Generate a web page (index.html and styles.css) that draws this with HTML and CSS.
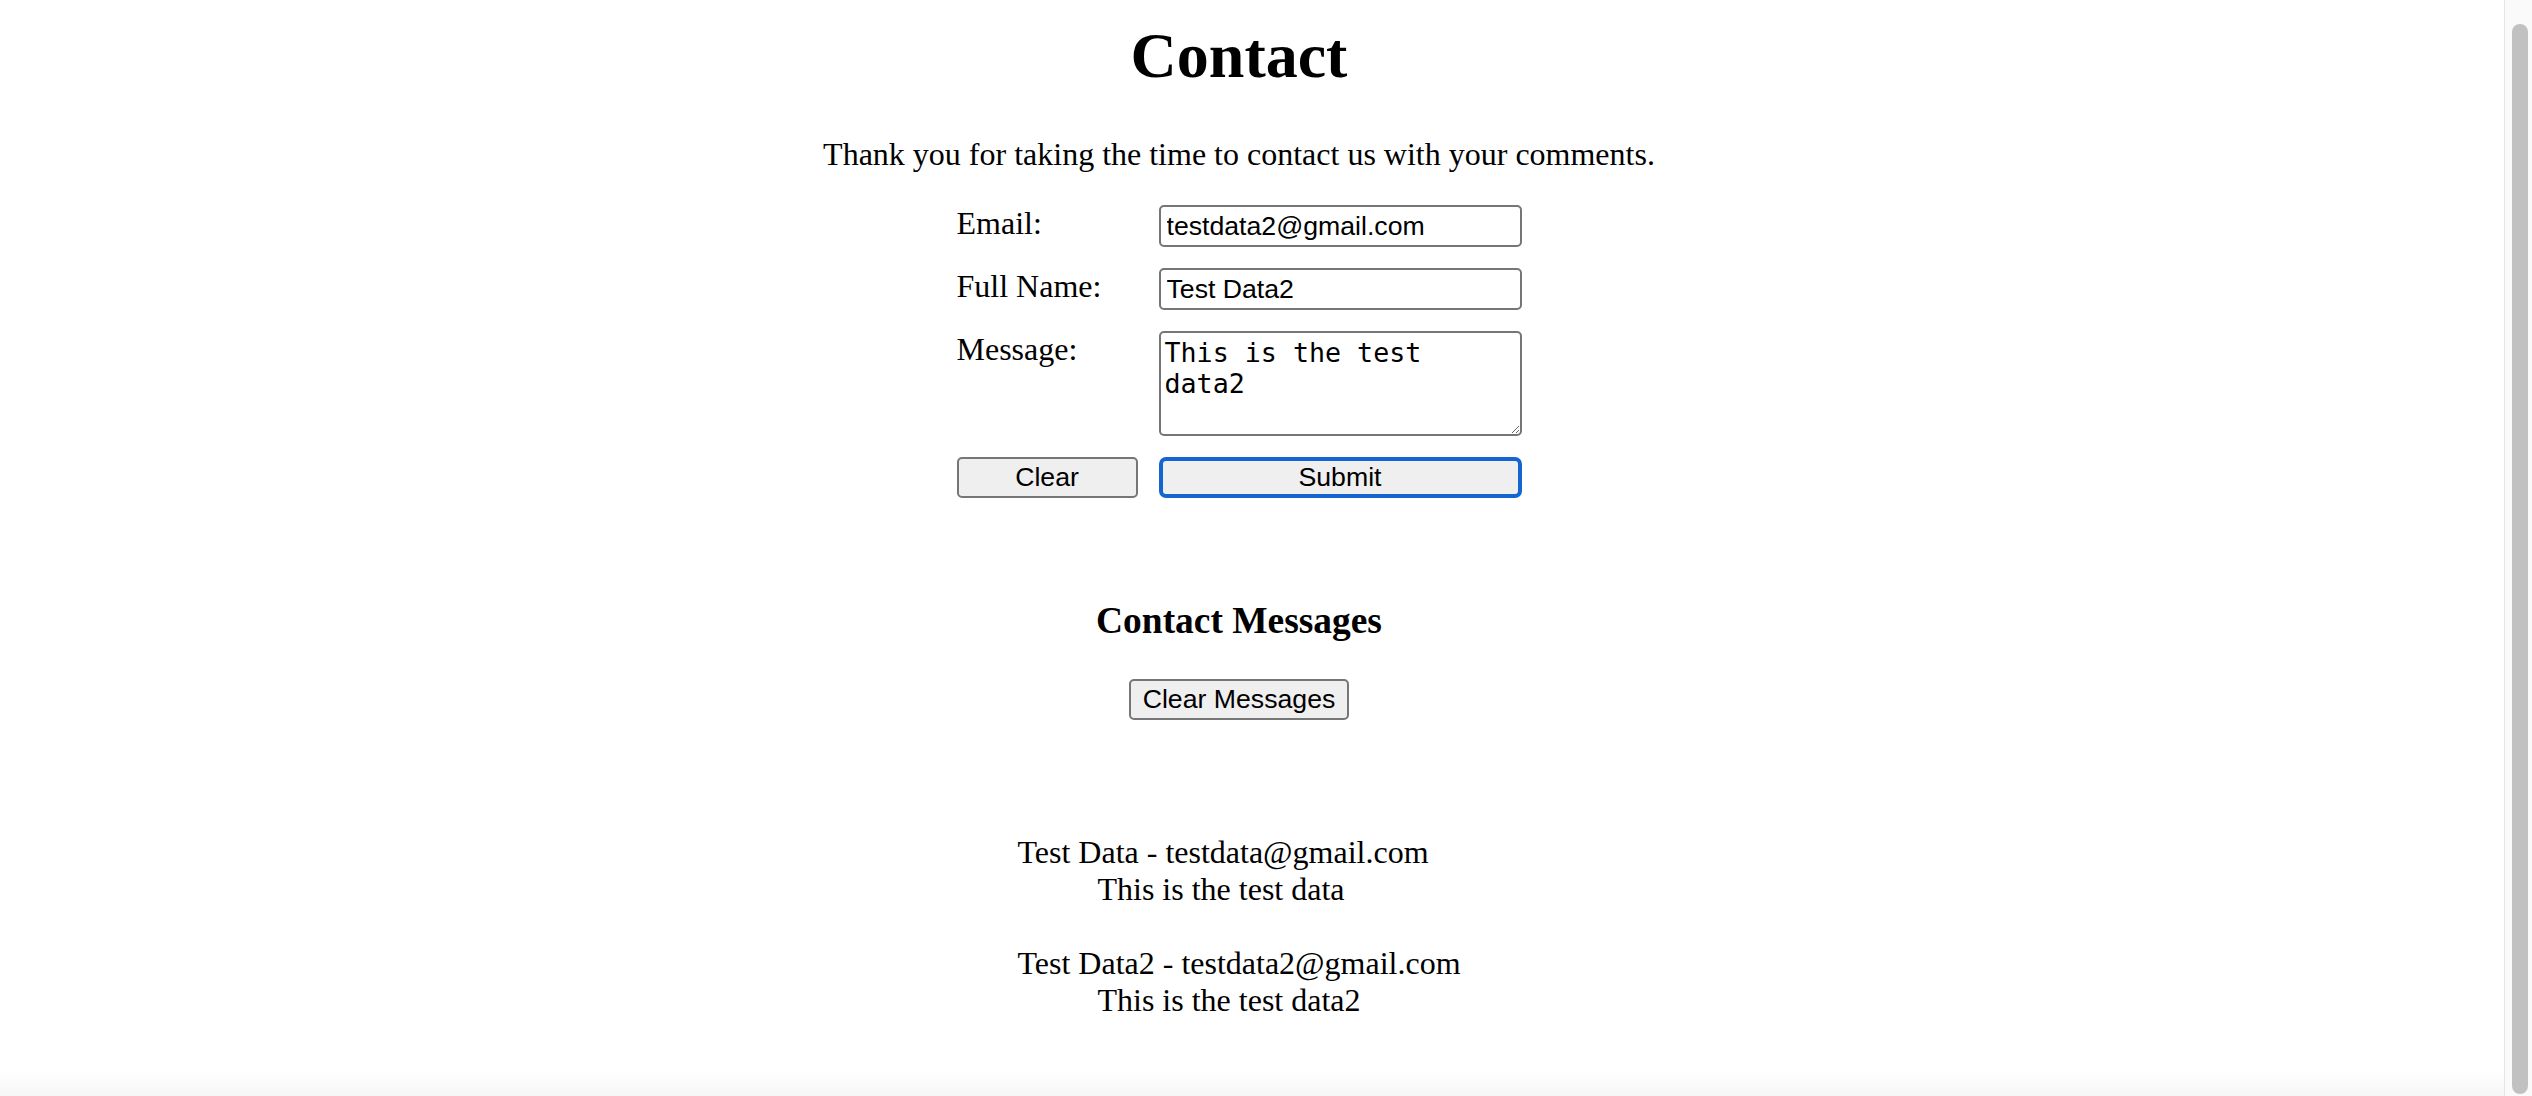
FILE: index.html
```html
<!DOCTYPE html>
<html lang="en">
<head>
<meta charset="utf-8">
<title>Contact</title>
<link rel="stylesheet" href="styles.css">
</head>
<body>
<div class="page">
  <header class="intro">
    <h1 class="title">Contact</h1>
    <p class="lead">Thank you for taking the time to contact us with your comments.</p>
  </header>

  <form class="contact-form">
    <label class="field-label" for="email">Email:</label>
    <input class="field-input" id="email" type="email" value="testdata2@gmail.com">

    <label class="field-label" for="fullname">Full Name:</label>
    <input class="field-input" id="fullname" type="text" value="Test Data2">

    <label class="field-label" for="message">Message:</label>
    <textarea class="field-textarea" id="message" rows="3">This is the test data2</textarea>

    <button class="btn btn-clear" type="reset">Clear</button>
    <button class="btn btn-submit" type="submit">Submit</button>
  </form>

  <section class="messages">
    <h3 class="messages-title">Contact Messages</h3>
    <div class="messages-actions">
      <button class="btn btn-clear-messages" type="button">Clear Messages</button>
    </div>
    <div class="message-list-wrap">
      <div class="message-list">
        <dl class="message">
          <dt class="message-from">Test Data - testdata@gmail.com</dt>
          <dd class="message-text">This is the test data</dd>
        </dl>
        <dl class="message">
          <dt class="message-from">Test Data2 - testdata2@gmail.com</dt>
          <dd class="message-text">This is the test data2</dd>
        </dl>
      </div>
    </div>
  </section>
</div>
<div class="scrollbar" aria-hidden="true"><div class="scrollbar-thumb"></div></div>
</body>
</html>
```

FILE: styles.css
```css
html {
  background: linear-gradient(to bottom, #ffffff calc(100% - 26px), #f6f6f6 100%);
  min-height: 100%;
}

body {
  margin: 0;
  font-family: "Liberation Serif", "Times New Roman", serif;
  color: #000;
}

.page {
  box-sizing: border-box;
  padding: 19px 54px 0 0;
  text-align: center;
}

.title {
  margin: 0 0 43px;
  font-size: 64px;
  font-weight: bold;
  line-height: normal;
}

.lead {
  margin: 0 0 32px;
  font-size: 32px;
  line-height: normal;
}

.contact-form {
  display: grid;
  grid-template-columns: 181px 363px;
  column-gap: 21px;
  row-gap: 21px;
  justify-content: center;
  align-items: start;
  margin: 0;
  text-align: left;
}

.field-label {
  font-size: 32px;
  line-height: normal;
}

.field-input {
  box-sizing: border-box;
  width: 363px;
  height: 42px;
  margin: 0;
  padding: 0 6px;
  border: 2px solid #767676;
  border-radius: 5px;
  background: #fff;
  color: #000;
  font-family: "Liberation Sans", Arial, sans-serif;
  font-size: 26.67px;
}

.field-textarea {
  box-sizing: border-box;
  width: 363px;
  height: 105px;
  margin: 0;
  padding: 4px;
  border: 2px solid #767676;
  border-radius: 5px;
  background: #fff;
  color: #000;
  font-family: "DejaVu Sans Mono", "Liberation Mono", monospace;
  font-size: 26.67px;
  line-height: 31px;
  overflow: hidden;
}

.btn {
  box-sizing: border-box;
  height: 41px;
  margin: 0;
  padding: 0 12px;
  border: 2px solid #767676;
  border-radius: 5px;
  background: #efefef;
  color: #000;
  font-family: "Liberation Sans", Arial, sans-serif;
  font-size: 26.67px;
  line-height: normal;
}

.btn-clear {
  width: 181px;
}

.btn-submit {
  width: 363px;
  border: 4px solid #1464d2;
  border-radius: 7px;
}

.messages-title {
  margin: 101px 0 37px;
  font-size: 37.44px;
  font-weight: bold;
  line-height: normal;
}

.messages-actions {
  display: flex;
  justify-content: center;
}

.message-list-wrap {
  display: flex;
  justify-content: center;
  margin-top: 114px;
}

.message-list {
  text-align: left;
  font-size: 32px;
  line-height: normal;
}

.message {
  margin: 0;
}

.message + .message {
  margin-top: 37px;
}

.message-from {
  margin: 0;
}

.message-text {
  margin: 0 0 0 80px;
}

.scrollbar {
  position: fixed;
  top: 0;
  right: 0;
  bottom: 0;
  width: 27px;
  background: #fafafa;
  border-left: 1px solid #e6e6e6;
}

.scrollbar-thumb {
  position: absolute;
  top: 24px;
  bottom: 2px;
  left: 7px;
  width: 16px;
  border-radius: 8px;
  background: #c1c1c1;
}
```
